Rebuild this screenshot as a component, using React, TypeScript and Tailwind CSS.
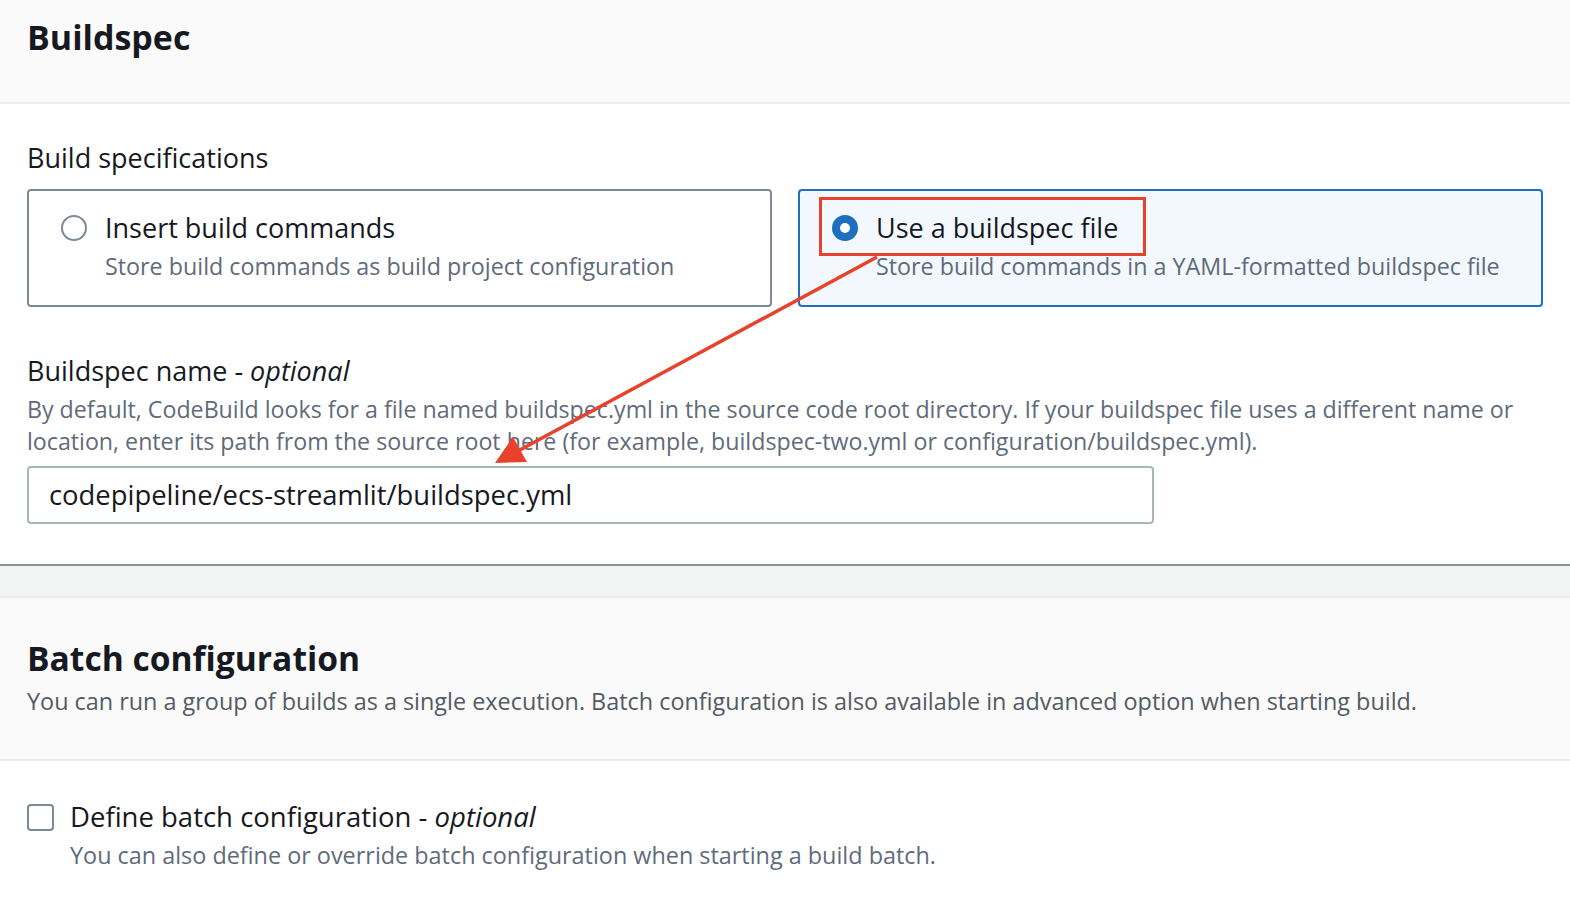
const font = { fontFamily: '"Open Sans", "Noto Sans", sans-serif' };

const Radio = ({ checked }: { checked?: boolean }) =>
  checked ? (
    <svg width="28" height="28" viewBox="0 0 28 28" className="shrink-0">
      <circle cx="14" cy="14" r="13" fill="#1f6fc0" />
      <circle cx="14" cy="14" r="5" fill="#ffffff" />
    </svg>
  ) : (
    <svg width="28" height="28" viewBox="0 0 28 28" className="shrink-0">
      <circle cx="14" cy="14" r="12" fill="#ffffff" stroke="#7d8998" strokeWidth="2" />
    </svg>
  );

const OptionCard = ({
  title,
  desc,
  checked,
}: {
  title: string;
  desc: string;
  checked?: boolean;
}) => (
  <div
    className={
      checked
        ? 'h-[118px] rounded-[4px] border-2 border-[#1f6fc0] bg-[#f2f8fd] pl-[31px] pt-[19px]'
        : 'h-[118px] rounded-[4px] border-2 border-[#7d8998] bg-white pl-[31px] pt-[19px]'
    }
  >
    <div className="flex items-center gap-[17px]">
      <Radio checked={checked} />
      <span className="text-[27px] leading-[36px] text-[#16191f]">{title}</span>
    </div>
    <div className="pl-[45px] text-[23.3px] leading-[40px] text-[#5f6b7a]">{desc}</div>
  </div>
);

export default function App() {
  return (
    <div className="relative w-[1570px] h-[900px] overflow-hidden bg-white" style={font}>
      <div className="h-[104px] bg-[#fafafa] border-b-2 border-[#eaeded] px-[27px] pt-[14px]">
        <h1 className="text-[34px] leading-[46px] font-bold text-[#16191f]">Buildspec</h1>
      </div>

      <div className="h-[460px] px-[27px] pt-[36px]">
        <div className="text-[27px] leading-[36px] text-[#16191f]">Build specifications</div>
        <div className="mt-[13px] grid grid-cols-2 gap-[26px]">
          <OptionCard
            title="Insert build commands"
            desc="Store build commands as build project configuration"
          />
          <OptionCard
            checked
            title="Use a buildspec file"
            desc="Store build commands in a YAML-formatted buildspec file"
          />
        </div>

        <div className="mt-[46px] text-[27px] leading-[36px] text-[#16191f]">
          Buildspec name - <i>optional</i>
        </div>
        <div className="mt-[4px] text-[23.2px] leading-[32px] text-[#5f6b7a]">
          By default, CodeBuild looks for a file named buildspec.yml in the source code root directory. If your
          buildspec file uses a different name or location, enter its path from the source root here (for example,
          buildspec-two.yml or configuration/buildspec.yml).
        </div>
        <div className="mt-[9px] flex h-[58px] w-[1127px] items-center rounded-[4px] border-2 border-[#aab7b8] px-[20px] text-[27.4px] text-[#16191f]">
          codepipeline/ecs-streamlit/buildspec.yml
        </div>
      </div>

      <div className="h-[34px] border-t-2 border-[#879596] bg-[#f2f3f3] border-b-2 border-b-[#eaeded]" />

      <div className="h-[163px] bg-[#fafafa] border-b-2 border-[#eaeded] px-[27px] pt-[38px]">
        <h2 className="text-[33.6px] leading-[44px] font-bold text-[#16191f]">Batch configuration</h2>
        <div className="mt-[5px] text-[23.4px] leading-[32px] text-[#545b64]">
          You can run a group of builds as a single execution. Batch configuration is also available in advanced
          option when starting build.
        </div>
      </div>

      <div className="px-[27px] pt-[38px]">
        <div className="flex items-center gap-[16px]">
          <div className="h-[27px] w-[27px] rounded-[4px] border-2 border-[#7d8998]" />
          <span className="text-[27.5px] leading-[36px] text-[#16191f]">
            Define batch configuration - <i>optional</i>
          </span>
        </div>
        <div className="pl-[43px] pt-[2px] text-[23.4px] leading-[36px] text-[#5f6b7a]">
          You can also define or override batch configuration when starting a build batch.
        </div>
      </div>

      <svg className="pointer-events-none absolute left-0 top-0" width="1570" height="900">
        <rect x="820.5" y="198.5" width="324" height="56" fill="none" stroke="#e8412c" strokeWidth="3" />
        <line x1="877" y1="257" x2="518" y2="451" stroke="#e8412c" strokeWidth="3.5" />
        <polygon points="495,463 527,462 513,437" fill="#e8412c" />
      </svg>
    </div>
  );
}
